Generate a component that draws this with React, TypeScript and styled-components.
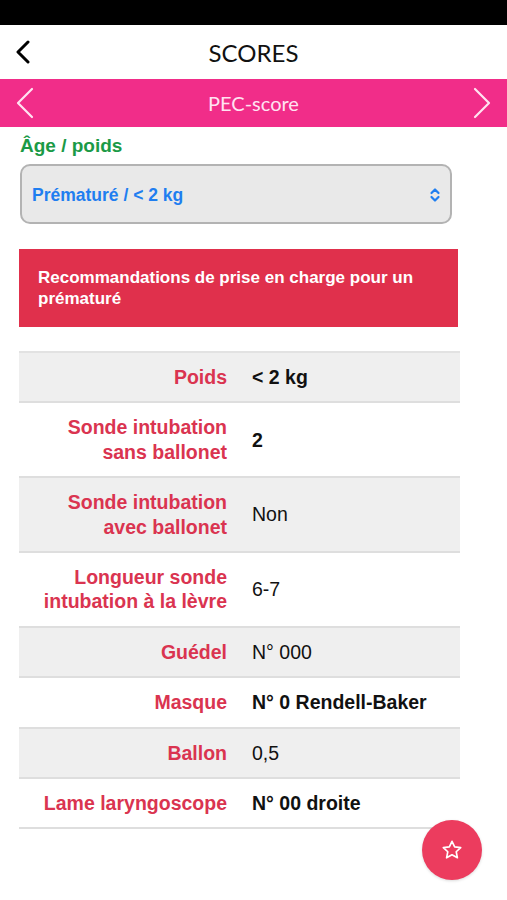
import React from "react";
import styled, { createGlobalStyle } from "styled-components";

const pallete = {
  pink: "#f12d89",
  pinkText: "#ffe3f1",
  banner: "#e0304c",
  label: "#da3450",
  green: "#1b9a46",
  blue: "#1f7ef0",
  rowGray: "#efefef",
  line: "#dedede",
  fab: "#ec3c5e",
};

const GlobalStyle = createGlobalStyle`
  body {
    margin: 0;
    background: #ffffff;
    font-family: "Liberation Sans", Arial, sans-serif;
  }
`;

const Page = styled.div`
  position: relative;
  width: 507px;
  min-height: 900px;
  background: #ffffff;
  overflow: hidden;
`;

const StatusBar = styled.div`
  height: 25px;
  background: #000000;
`;

const Header = styled.div`
  position: relative;
  height: 54px;
  display: flex;
  align-items: center;
  justify-content: center;
  font-family: Lato, "Open Sans", sans-serif;
  font-size: 24px;
  color: #111111;

  .header-back {
    position: absolute;
    left: 15px;
    top: 15px;
  }
`;

const ScoreBar = styled.div`
  height: 48px;
  background: ${pallete.pink};
  display: flex;
  align-items: center;
  justify-content: space-between;
  padding: 0 15px;
  font-family: Lato, "Open Sans", sans-serif;
  font-size: 20px;
  color: ${pallete.pinkText};
`;

const Content = styled.div`
  width: 441px;
  margin-left: 19px;
`;

const FieldLabel = styled.div`
  margin-top: 8px;
  line-height: 22px;
  font-size: 19px;
  font-weight: bold;
  color: ${pallete.green};
  padding-left: 1px;
`;

const Select = styled.div`
  box-sizing: border-box;
  margin: 7px 0 0 1px;
  width: 432px;
  height: 60px;
  border: 2px solid #b3b3b3;
  border-radius: 10px;
  background: #e9e9e9;
  display: flex;
  align-items: center;
  justify-content: space-between;
  padding: 2px 9px 0 10px;
  font-size: 17.5px;
  font-weight: bold;
  color: ${pallete.blue};
`;

const Banner = styled.div`
  box-sizing: border-box;
  margin-top: 25px;
  width: 439px;
  padding: 18px 19px;
  background: ${pallete.banner};
  color: #ffffff;
  font-size: 17px;
  font-weight: bold;
  line-height: 21px;
`;

const Table = styled.div`
  margin-top: 24px;
  border-top: 2px solid #e2e2e2;
`;

const Row = styled.div<{ $gray: boolean }>`
  display: flex;
  align-items: center;
  padding: 12px 0;
  border-bottom: 2px solid ${pallete.line};
  background: ${(p) => (p.$gray ? pallete.rowGray : "#ffffff")};
  font-size: 19.5px;
  line-height: 24.4px;
`;

const Label = styled.div`
  width: 208px;
  flex-shrink: 0;
  text-align: right;
  font-weight: bold;
  color: ${pallete.label};
`;

const Value = styled.div<{ $bold: boolean }>`
  margin-left: 25px;
  color: #111111;
  font-weight: ${(p) => (p.$bold ? "bold" : "normal")};
`;

const Fab = styled.div`
  position: absolute;
  right: 25px;
  bottom: 20px;
  width: 60px;
  height: 60px;
  border-radius: 50%;
  background: ${pallete.fab};
  display: flex;
  align-items: center;
  justify-content: center;
  box-shadow: 0 1px 3px rgba(0, 0, 0, 0.15);
`;

const rows = [
  { label: ["Poids"], value: "< 2 kg", bold: true },
  { label: ["Sonde intubation", "sans ballonet"], value: "2", bold: true },
  { label: ["Sonde intubation", "avec ballonet"], value: "Non", bold: false },
  { label: ["Longueur sonde", "intubation à la lèvre"], value: "6-7", bold: false },
  { label: ["Guédel"], value: "N° 000", bold: false },
  { label: ["Masque"], value: "N° 0 Rendell-Baker", bold: true },
  { label: ["Ballon"], value: "0,5", bold: false },
  { label: ["Lame laryngoscope"], value: "N° 00 droite", bold: true },
];

const Chevron = ({ dir, color, width }: { dir: "left" | "right"; color: string; width: number }) => (
  <svg width="20" height="32" viewBox="0 0 20 32" fill="none">
    <path
      d={dir === "left" ? "M17 2 L3 16 L17 30" : "M3 2 L17 16 L3 30"}
      stroke={color}
      strokeWidth={width}
      strokeLinecap="round"
      strokeLinejoin="round"
    />
  </svg>
);

const App: React.FC = () => {
  return (
    <Page>
      <GlobalStyle />
      <StatusBar />
      <Header>
        <svg className="header-back" width="18" height="24" viewBox="0 0 18 24" fill="none">
          <path d="M13 2 L3 12 L13 22" stroke="#000" strokeWidth="3" strokeLinecap="round" strokeLinejoin="round" />
        </svg>
        SCORES
      </Header>
      <ScoreBar>
        <Chevron dir="left" color={pallete.pinkText} width={2.2} />
        <span>PEC-score</span>
        <Chevron dir="right" color={pallete.pinkText} width={2.2} />
      </ScoreBar>
      <Content>
        <FieldLabel>Âge / poids</FieldLabel>
        <Select>
          <span>Prématuré / &lt; 2 kg</span>
          <svg width="12" height="16" viewBox="0 0 12 16" fill="none">
            <path d="M2.5 6 L6 2.5 L9.5 6 M2.5 10 L6 13.5 L9.5 10" stroke={pallete.blue} strokeWidth="2.2" strokeLinecap="round" strokeLinejoin="round" />
          </svg>
        </Select>
        <Banner>Recommandations de prise en charge pour un prématuré</Banner>
        <Table>
          {rows.map((row, index) => (
            <Row $gray={index % 2 === 0} key={index}>
              <Label>
                {row.label.map((line) => (
                  <div key={line}>{line}</div>
                ))}
              </Label>
              <Value $bold={row.bold}>{row.value}</Value>
            </Row>
          ))}
        </Table>
      </Content>
      <Fab>
        <svg width="22" height="22" viewBox="0 0 24 24" fill="none">
          <path
            d="M12 2.5 L14.9 8.6 L21.5 9.4 L16.6 13.9 L17.9 20.5 L12 17.2 L6.1 20.5 L7.4 13.9 L2.5 9.4 L9.1 8.6 Z"
            stroke="#ffffff"
            strokeWidth="1.8"
            strokeLinejoin="round"
          />
        </svg>
      </Fab>
    </Page>
  );
};

export default App;
